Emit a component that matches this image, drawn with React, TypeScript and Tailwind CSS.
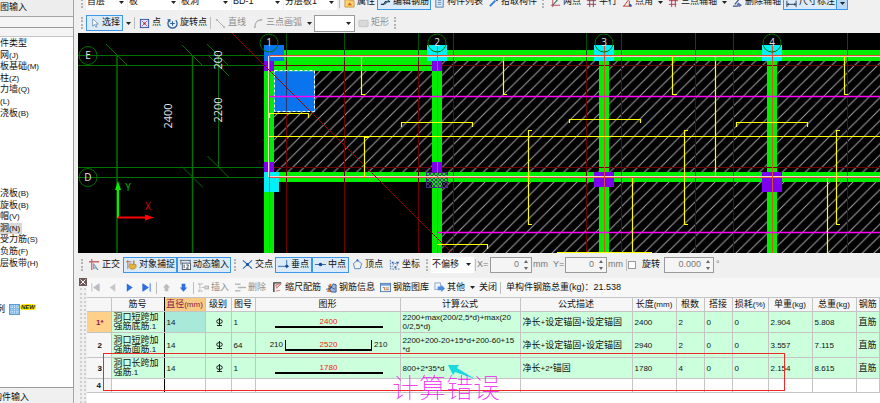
import type { ReactNode } from 'react';

const LIGHT = '#00ee00';
const AXIS = '#007000';
const DARK_RED = '#6e0000';

// ---------- small icons, all on a 12 x 12 grid ----------
const icons: Record<string, ReactNode> = {
    cursor: <path d="M4 1v8l2-2 1.5 3 1.3-.6L7.4 6.500h2.800z" fill="#fff" stroke="#5b7fa8" strokeWidth=".8" />,
    point: <><rect x="1.500" y="1.500" width="9" height="9" fill="#dfe8fb" stroke="#2c4ea5" /><path d="M3 3l6 6M9 3L3 9" stroke="#d04a6a" /><circle cx="6" cy="6" r="1.200" fill="#b0203a" /></>,
    rotate: <><path d="M2.500 2.500A5 5 0 1 0 9.500 2.500" fill="none" stroke="#2b5fa6" strokeWidth="1.400" /><path d="M0 1.500l4-.5-.5 4z" fill="#2b5fa6" /><path d="M6 3.500v5M3.500 6h5" stroke="#2b5fa6" strokeWidth="1.200" /></>,
    line: <><path d="M2 2l8 8" stroke="#a9a9a9" /><path d="M1 1h2v2H1zM9 9h2v2H9z" fill="#b5b5b5" /></>,
    arc: <><path d="M2 10C2 5 5 2 9 2" fill="none" stroke="#a9a9a9" strokeWidth="1.200" /><path d="M1 9h2v2H1zM8 1h2v2H8z" fill="#b5b5b5" /></>,
    rect: <rect x="1" y="2.500" width="10" height="7" rx="1" fill="#d8d8d8" stroke="#c4c4c4" />,
    props: <><path d="M1 3h4l1 1h5v7H1z" fill="#ffd36b" stroke="#b98a2f" strokeWidth=".8" /><path d="M4 9l2-3 3 3z" fill="#c7641e" /></>,
    edit: <><path d="M1 8h3l2-3h5" fill="none" stroke="#1e3350" strokeWidth="1.300" /><path d="M5 8l5-5" stroke="#4a6c94" strokeWidth="1.300" /></>,
    list: <><rect x="2" y="1" width="8" height="10" fill="#e5f0fc" stroke="#4673ad" /><path d="M4 4h4M4 6h4M4 8h4" stroke="#4673ad" strokeWidth=".8" /></>,
    pick: <><path d="M2 10l6-6" stroke="#2d7bd6" strokeWidth="2" /><path d="M7 2l3 3 1-2-2-2z" fill="#174a91" /></>,
    twoPoint: <><path d="M3 1v10M1 9h10" stroke="#c0405a" /><path d="M3 9l6-7" stroke="#2f7a4a" strokeWidth="1.200" /></>,
    parallel: <path d="M4 1v10M8 1v10M1 4h10M1 8h10" stroke="#8a3a55" />,
    angle: <><path d="M1 10h10M2 10l6-8M8 4v6" fill="none" stroke="#c0392b" /><circle cx="9" cy="9" r="1.300" fill="#2c4ea5" /></>,
    threePoint: <path d="M4 1v10M1 4h10M8 3v8M1 8h8" stroke="#b0304a" />,
    eraser: <><path d="M1 10h6M3 8l6-7" stroke="#324f86" strokeWidth="1.200" /><path d="M7 6l4 3-3 2-3-3z" fill="#5d76b5" /></>,
    dimension: <><path d="M1 4v7M11 4v7M1 8h10" stroke="#223a55" /><path d="M1 8l2-1.500v3zM11 8L9 6.500v3z" fill="#223a55" /><path d="M1 1h4v2H1z" fill="#59b86c" /></>,
    ortho: <><path d="M3 0v12M0 3h11" stroke="#c8686a" strokeWidth="1.400" /><path d="M5 5v6l1.500-1.500L10 12z" fill="#b9d0ea" stroke="#5573a0" strokeWidth=".7" /></>,
    snap: <><path d="M2 1v10M0 3h6" stroke="#b06c6c" /><path d="M4 5l4 1V2l1 0v4h2v3l-2 2H5L3 8z" fill="#e7b23a" stroke="#9a7424" strokeWidth=".6" /></>,
    dynInput: <><path d="M0 1.500h12M1 1v5M11 1v3" stroke="#5b6472" /><rect x="2.500" y="4.500" width="9" height="7" fill="#fff" stroke="#4c5563" /><path d="M4.500 6v4M7 6.500h2v1.500l-2 2h2.500" fill="none" stroke="#1e2a3c" strokeWidth=".9" /></>,
    cross: <><path d="M1 1.500l10 9M11 1.500l-10 9" stroke="#2b6cb8" strokeWidth="1.200" /><circle cx="6" cy="6" r="1.600" fill="#1a4f99" /></>,
    perp: <><path d="M9.500 1v9M0 8h12" stroke="#2b66b3" /><circle cx="9.500" cy="8" r="1.600" fill="#164a95" /></>,
    mid: <><path d="M0 6h12" stroke="#2b66b3" /><circle cx="6" cy="6" r="2" fill="#164a95" /></>,
    pentagon: <><path d="M6 1.500L10.500 5 9 10.500H3L1.500 5z" fill="none" stroke="#4f86c6" /><circle cx="6" cy="1.500" r="1.200" fill="#2463ae" /></>,
    coord: <><path d="M1.500 1v10h10M3 9l3-5 3 3 2-5" fill="none" stroke="#4b7ab5" strokeDasharray="2 1" /><path d="M8 3h2v2H8zM3 3h2v2H3zM6 8h2v2H6z" fill="#2e63a6" /></>,
    insert: <><path d="M0 2h5M0 10h5M2 2v8" stroke="#bcbcbc" strokeWidth="1.500" strokeDasharray="2 1" /><path d="M4 6h3" stroke="#bcbcbc" /><rect x="7.500" y="4.500" width="4" height="3" fill="#ddd" stroke="#b0b0b0" /></>,
    remove: <><path d="M0 2.500h6M0 9.500h6M3 6h4" stroke="#bcbcbc" strokeWidth="1.500" /><path d="M6 6h6" stroke="#b0b0b0" strokeWidth="1.500" /></>,
    scale: <><path d="M2 11V1h8" fill="none" stroke="#3d3d3d" strokeWidth="1.500" /><path d="M4 3l6-1-5 5zM4 10l5-1" stroke="#d0605a" fill="#f3c6c0" strokeWidth=".8" /></>,
    info: <><path d="M1 11l3-9 2 0 0 9z" fill="#d7822c" /><path d="M4 8l4-6 3 1v8H6z" fill="#9fb7e0" stroke="#27468c" strokeWidth=".9" /><path d="M0 8l5-1M2 4l8 4" stroke="#27468c" strokeWidth=".8" /></>,
    gallery: <><rect x=".5" y="1.500" width="11" height="9" fill="#eef5ff" stroke="#4f7ab3" /><path d="M1 2h10v2H1z" fill="#6e9cd6" /><path d="M3 6h2v3M6 6.500h4M6 8.500h4" fill="none" stroke="#b06f2a" strokeWidth=".9" /></>,
    other: <><rect x="1" y="1" width="6" height="7" fill="#eef5ff" stroke="#8aa4c8" /><path d="M4 5h4V3l4 4-4 4V9H4z" fill="#4d8be0" /></>,
    first: <path d="M2 1.500v9M10 2v8L4 6z" fill="#b9bdc3" stroke="#b9bdc3" />,
    prev: <path d="M9 1.500v9L3 6z" fill="#c3c7cc" />,
    next: <path d="M3 1.500v9L9.500 6z" fill="#2d6fe0" />,
    last: <path d="M2 2v8l6-4zM10 1.500v9" fill="#2d6fe0" stroke="#2d6fe0" />,
    up: <path d="M6 2l4 4H8v4H4V6H2z" fill="#bcbcc0" />,
    down: <path d="M6 10.500L10 6H8V2H4v4H2z" fill="#2d6fe0" />,
};

function Icon({ name }: { name: string }) {
    return <svg viewBox="0 0 12 12" className="h-[11px] w-[11px] shrink-0">{icons[name]}</svg>;
}

function Tool({ icon, label, width, on, off }: { icon: string; label: string; width: string; on?: boolean; off?: boolean }) {
    return (
        <button
            className={`flex h-4 shrink-0 items-center gap-0.5 whitespace-nowrap border px-0.5 ${width} ${on ? 'border-[#3c97e8] bg-[#dcebf9]' : 'border-transparent'} ${off ? 'text-[#8e8e8e]' : ''}`}
        >
            <Icon name={icon} />
            {label}
        </button>
    );
}

function NavButton({ icon, label }: { icon: string; label: string }) {
    return (
        <button aria-label={label} className="flex h-4 w-[17px] shrink-0 items-center justify-center">
            <Icon name={icon} />
        </button>
    );
}

const Caret = () => <svg viewBox="0 0 5 3" className="h-[3px] w-[5px]"><path d="M0 0h5L2.500 3z" fill="#222" /></svg>;
const Grip = () => <span className="mx-[3px] h-3 w-0.5 shrink-0 border-l-2 border-dotted border-[#b4b4b4]" />;
const Sep = () => <span className="mx-px h-3 w-px shrink-0 bg-[#bdbdbd]" />;

function More({ label }: { label: string }) {
    return <button aria-label={label} className="flex h-4 w-[10px] shrink-0 items-center justify-center"><Caret /></button>;
}

function Combo({ label, value, className }: { label: string; value: string; className: string }) {
    return (
        <span className={`relative flex shrink-0 items-center bg-white ${className}`}>
            <select aria-label={label} className="h-full w-full appearance-none pl-px outline-none">
                <option>{value}</option>
            </select>
            <span className="pointer-events-none absolute right-[3px]"><Caret /></span>
        </span>
    );
}

function Spin({ id, value, width }: { id: string; value: string; width: string }) {
    return (
        <span className={`flex h-4 shrink-0 items-center border border-[#9a9a9a] bg-[#f5f5f5] ${width}`}>
            <input id={id} defaultValue={value} className="w-full min-w-0 bg-transparent pr-1 text-right text-[#777] outline-none" />
            <svg viewBox="0 0 6 12" className="mr-0.5 h-3 w-[6px] shrink-0"><path d="M1 4l2-3 2 3zM1 8l2 3 2-3z" fill="#666" /></svg>
        </span>
    );
}

// Chinese at full size, the half-width characters a step smaller
function Mix({ children }: { children: string }) {
    return (
        <>
            {children.split(/([\x20-\x7e]+)/).filter(Boolean).map((part, i) =>
                /[\x20-\x7e]/.test(part) ? <span key={i} className="text-[8px]">{part}</span> : part
            )}
        </>
    );
}

const tree = [
    '件类型', '网(J)', '板基础(M)', '柱(Z)', '力墙(Q)', '(L)', '浇板(B)', '', '', '', '', '', '',
    '浇板(B)', '旋板(B)', '帽(V)', '洞(N)', '受力筋(S)', '负筋(F)', '层板带(H)', '', '', '',
];

function Sidebar() {
    return (
        <aside className="flex w-[78px] shrink-0 flex-col overflow-hidden bg-[#f0f0f0]">
            <div className="mr-1 flex h-[17px] items-center border-r border-b border-[#a5a5a5] bg-[#ededed] whitespace-nowrap">
                图输入
            </div>
            <div className="mr-1 h-[10px] border-r border-[#a5a5a5] bg-[#f4f4f4]" />
            <div className="mr-1 flex-1 border-y border-r border-[#9a9a9a] bg-white">
                <div className="h-[9px] border-b border-[#c4c4c4] bg-[#f4f4f4]" />
                <ul className="mt-px grid h-[277px] auto-rows-fr">
                    {tree.map((name, i) => (
                        <li key={i} className="flex items-center whitespace-nowrap leading-none">
                            <span className={name === '洞(N)' ? 'bg-[#d9d9d9] py-px pr-0.5' : ''}><Mix>{name}</Mix></span>
                        </li>
                    ))}
                    <li className="flex items-center whitespace-nowrap leading-none">
                        <span className="-ml-1">例</span>
                        <svg viewBox="0 0 11 11" className="ml-1 h-[11px] w-[11px] shrink-0">
                            <rect x=".5" y=".5" width="10" height="10" fill="#7db8ec" stroke="#5a9bd8" />
                            <path d="M3 1v9M5.500 1v9M8 1v9M1 3h9M1 8h9" stroke="#d7ebfb" strokeDasharray="1 1" />
                        </svg>
                        <span className="-mt-1 rounded-sm bg-[#ffee00] px-px text-[6px] font-black italic text-[#222]">NEW</span>
                    </li>
                </ul>
            </div>
            <div className="mr-1 flex h-[15px] items-center border-r border-[#a5a5a5] whitespace-nowrap pt-1">
                <span className="-ml-[7px]">构件输入</span>
            </div>
        </aside>
    );
}

// ---------- drawing ----------
const axes = [
    { n: '1', x: 269 }, { n: '2', x: 437 }, { n: '3', x: 604 }, { n: '4', x: 772 },
];
const redGrid = [287, 345, 419, 454, 587, 622, 696, 734, 848];
const bays = [
    { x: 274, y: 71, w: 158, h: 101 },
    { x: 442, y: 61, w: 157, h: 111 },
    { x: 609, y: 61, w: 158, h: 111 },
    { x: 777, y: 61, w: 103, h: 111 },
    { x: 442, y: 182, w: 157, h: 71 },
    { x: 609, y: 182, w: 158, h: 71 },
    { x: 777, y: 182, w: 103, h: 71 },
];
const blocks = [
    { x: 264, y: 45, w: 20, h: 16, fill: '#0a74ee' },
    { x: 264, y: 61, w: 10, h: 10, fill: '#7d00f0' },
    { x: 427, y: 45, w: 20, h: 16, fill: '#00f0f8' },
    { x: 432, y: 61, w: 10, h: 10, fill: '#7d00f0' },
    { x: 594, y: 45, w: 20, h: 16, fill: '#00f0f8' },
    { x: 762, y: 45, w: 20, h: 16, fill: '#00f0f8' },
    { x: 264, y: 162, w: 10, h: 10, fill: '#7d00f0' },
    { x: 264, y: 172, w: 15, h: 20, fill: '#00f0f8' },
    { x: 432, y: 162, w: 10, h: 10, fill: '#7d00f0' },
    { x: 594, y: 172, w: 20, h: 15, fill: '#7d00f0' },
    { x: 762, y: 172, w: 20, h: 20, fill: '#7d00f0' },
];
const rebars = [
    'M269 136.500H880',
    'M361.500 56V94.500H365', 'M503.500 56V94.500H507', 'M672.500 56V94.500H677', 'M844.500 56V94.500H848',
    'M269.500 118V113.500H308.500V118', 'M401.500 127V122.500H472.500V127', 'M569.500 123V119.500H640.500V123', 'M736.500 127V122.500H807.500V127',
    'M715.500 56V177', 'M369 137.500H364.500V177',
    'M532 130.500H528.500V224.500H532', 'M688 130.500H684.500V224.500H688', 'M840 130.500H836.500V224.500H840',
    'M632.500 178V253', 'M827.500 178V253', 'M437 244.500H487.500V249', 'M557 252.500H652',
];

function Drawing() {
    return (
        <svg
            viewBox="78 33 802 220"
            preserveAspectRatio="xMinYMin slice"
            className="block w-full bg-black font-['Open_Sans','Noto_Sans',sans-serif]"
        >
            <defs>
                <pattern id="hatch" width="11.500" height="11.500" patternUnits="userSpaceOnUse">
                    <path d="M-1 12.500L12.500 -1M-1 1L1 -1M10.500 12.500L12.500 10.500" stroke="#a4a4a4" />
                </pattern>
                <pattern id="check" width="4" height="4" patternUnits="userSpaceOnUse">
                    <path d="M0 0l4 4M4 0L0 4" stroke="#4b2a86" strokeWidth=".9" />
                </pattern>
            </defs>

            {bays.map((b, i) => <rect key={i} x={b.x} y={b.y} width={b.w} height={b.h} fill="url(#hatch)" />)}

            {/* dimension lines */}
            <g stroke={AXIS} fill="none">
                <path d="M78 55.500H269M78 65.500H269M78 167.500H269M78 177.500H269" />
                <path d="M117 55V253M192.500 55V253" strokeWidth="1.500" />
                <path d="M218.500 55V167" />
                <path d="M106 44l21 21M182 45l21 21M207 44l22 22M208 55l21 21M182 166.500l21 21M207.500 156l22 22" />
            </g>

            {/* beams */}
            <g fill={LIGHT}>
                <path d="M264 50H880V61H442V71H264zM264 172H880V182H264z" />
                {axes.map(a => <rect key={a.n} x={a.x - 5} y="50" width="10" height="203" />)}
            </g>

            <g stroke={DARK_RED}>
                {redGrid.map(x => <path key={x} d={`M${x - 0.5} 61V253`} />)}
                <path d="M274 65.500H880M274 167.500H880" />
            </g>
            <g stroke="#005200">
                {redGrid.map(x => <path key={x} d={`M${x - 0.5} 33V61`} />)}
            </g>

            {blocks.map((b, i) => <rect key={i} x={b.x} y={b.y} width={b.w} height={b.h} fill={b.fill} />)}
            <rect x="426.500" y="172.500" width="21" height="15" fill="url(#check)" stroke="#4b2a86" />

            {/* axes over the beams */}
            <g>
                <path d="M269 56.500H880M269 176.500H880M268.500 56V177M437.500 177V253" stroke="#f2d8d0" />
                <path d="M269 55.500H880M269 177.500H880" stroke="#e05038" />
                {axes.map(a => <path key={a.n} d={`M${a.x + 0.5} 45V253`} stroke="#d8502c" />)}
            </g>

            <rect x="274.500" y="71.500" width="40" height="40" fill="#0a74ee" stroke="#1e9bd8" />
            <rect x="274.500" y="70.500" width="40" height="41" fill="none" stroke="#fff" strokeDasharray="3 2" />
            <path d="M286.500 71V111" stroke="#2a3470" />
            <path d="M232 33L452 253" stroke="#8a0000" />

            <path d="M269 96.500H880M437 232.500H880" stroke="#ff00ff" strokeWidth="1.400" />
            <path d={rebars.join('')} fill="none" stroke="#ffff00" strokeWidth="1.200" />

            <g fill="none" stroke={AXIS}>
                {axes.map(a => <circle key={a.n} cx={a.x} cy="43" r="9" />)}
                <circle cx="88" cy="55.500" r="9" />
                <circle cx="88" cy="177.500" r="9" />
            </g>
            <g fill="#e4e4e4" textAnchor="middle" fontSize="10">
                {axes.map(a => <text key={a.n} x={a.x} y="46">{a.n}</text>)}
                <text x="88" y="59">E</text>
                <text x="88" y="181">D</text>
                <g fontSize="11">
                    <text transform="translate(172 116) rotate(-90)">2400</text>
                    <text transform="translate(222 60) rotate(-90)">200</text>
                    <text transform="translate(222 110) rotate(-90)">2200</text>
                </g>
            </g>

            {/* origin */}
            <path d="M118 218V188" stroke="#00f000" strokeWidth="2" />
            <path d="M115 190L118 181L121 190z" fill="#00f000" />
            <path d="M118 217.500H147" stroke="#f00" strokeWidth="2" />
            <path d="M145 214.500L154 217.500L145 220.500z" fill="#f00" />
            <g fontSize="10" textAnchor="middle">
                <text x="128" y="191" fill="#00c000">Y</text>
                <text x="148" y="210" fill="#e00000">X</text>
            </g>
        </svg>
    );
}

// ---------- rebar table ----------
const columns = [
    { title: '', width: 'w-[24px]' },
    { title: '筋号', width: 'w-[53px]' },
    { title: '直径(mm)', width: 'w-[41px]' },
    { title: '级别', width: 'w-[26px]' },
    { title: '图号', width: 'w-[24px]' },
    { title: '图形', width: 'w-[145px]' },
    { title: '计算公式', width: 'w-[120px]' },
    { title: '公式描述', width: 'w-[112px]' },
    { title: '长度(mm)', width: 'w-[44px]' },
    { title: '根数', width: 'w-[28px]' },
    { title: '搭接', width: 'w-[28px]' },
    { title: '损耗(%)', width: 'w-[36px]' },
    { title: '单重(kg)', width: 'w-[44px]' },
    { title: '总重(kg)', width: 'w-[44px]' },
    { title: '钢筋', width: '' },
];

const rows = [
    { name: ['洞口短跨加', '强筋底筋.1'], shape: '1', size: '2400', formula: ['2200+max(200/2,5*d)+max(20', '0/2,5*d)'], note: '净长+设定锚固+设定锚固', rest: ['2400', '2', '0', '0', '2.904', '5.808', '直筋'] },
    { name: ['洞口短跨加', '强筋面筋.1'], shape: '64', size: '2520', hook: '210', formula: ['2200+200-20+15*d+200-60+15', '*d'], note: '净长+设定锚固+设定锚固', rest: ['2940', '2', '0', '0', '3.557', '7.115', '直筋'] },
    { name: ['洞口长跨加', '强筋.1'], shape: '1', size: '1780', formula: ['800+2*35*d'], note: '净长+2*锚固', rest: ['1780', '4', '0', '0', '2.154', '8.615', '直筋'] },
];
const rowHeights = ['h-[21px]', 'h-[25px]', 'h-[21px]'];

function Shape({ size, hook }: { size: string; hook?: string }) {
    return (
        <div className="flex items-end justify-center gap-0.5 text-[8px] leading-[9px]">
            {hook && <span className="pb-0.5">{hook}</span>}
            <span className={`border-b-2 border-black text-center text-[#f01818] ${hook ? 'w-[87px] border-x' : 'w-[108px]'}`}>{size}</span>
            {hook && <span className="pb-0.5">{hook}</span>}
        </div>
    );
}

function RebarTable() {
    return (
        <table className="w-full table-fixed border-collapse whitespace-nowrap leading-[9px]">
            <thead>
                <tr className="h-[14px]">
                    {columns.map((c, i) => (
                        <th
                            key={i}
                            className={`border-y border-r border-[#c4c4c4] p-0 font-normal ${c.width} ${i === 2 ? 'bg-[#f8ca84] text-[#8a1a4a]' : 'bg-[#f6f6f6]'} ${i === 1 ? 'border-r-black' : ''}`}
                        >
                            <Mix>{c.title}</Mix>
                        </th>
                    ))}
                </tr>
            </thead>
            <tbody>
                {rows.map((r, i) => (
                    <tr key={i} className={`bg-[#ccffdb] *:border-r *:border-b *:border-[#c4c4c4] *:p-0 *:pl-0.5 ${rowHeights[i]}`}>
                        <th className={`text-[8px] ${i === 0 ? 'bg-[#ffd08a] font-bold text-[#8a1a4a]' : 'bg-[#f6f6f6]'}`}>{i === 0 ? '1*' : i + 1}</th>
                        <td className="border-r-black!">{r.name.map(l => <div key={l}><Mix>{l}</Mix></div>)}</td>
                        <td className={i === 0 ? 'bg-[#a9e9da]' : ''}><Mix>14</Mix></td>
                        <td>
                            <svg viewBox="0 0 7 8" className="mx-auto h-2 w-[7px]"><path d="M3.500 0v7M1 7.500h5" stroke="#222" /><ellipse cx="3.500" cy="3.500" rx="2.800" ry="2" fill="none" stroke="#222" /></svg>
                        </td>
                        <td><Mix>{r.shape}</Mix></td>
                        <td><Shape size={r.size} hook={r.hook} /></td>
                        <td>{r.formula.map(l => <div key={l}><Mix>{l}</Mix></div>)}</td>
                        <td><Mix>{r.note}</Mix></td>
                        {r.rest.map((v, j) => <td key={j}><Mix>{v}</Mix></td>)}
                    </tr>
                ))}
                <tr className="h-[14px] bg-white *:border-r *:border-b *:border-[#c4c4c4] *:p-0">
                    <th className="bg-[#f6f6f6] text-[8px]">4</th>
                    {columns.slice(1).map((c, i) => <td key={c.title} className={i === 0 ? 'border-r-black!' : ''} />)}
                </tr>
            </tbody>
        </table>
    );
}

export default function App() {
    return (
        <div className="flex h-screen overflow-hidden bg-[#f0f0f0] font-['Liberation_Sans','Noto_Sans_CJK_SC',sans-serif] text-[9px] text-[#111]">
            <Sidebar />
            <main className="flex min-w-0 flex-1 flex-col">
                <div className="h-[11px] overflow-hidden">
                    <div className="-mt-1.5 flex h-4 items-center">
                        <Grip />
                        <Combo label="楼层" value="首层" className="mr-px h-4 w-[41px]" />
                        <Combo label="构件类型" value="板" className="mr-px h-4 w-[51px]" />
                        <Combo label="构件" value="板洞" className="mr-px h-4 w-[51px]" />
                        <Combo label="名称" value="BD-1" className="mr-px h-4 w-[51px]" />
                        <Combo label="分层" value="分层板1" className="mr-px h-4 w-[53px]" />
                        <Sep />
                        <Tool icon="props" label="属性" width="w-[36px]" />
                        <Tool icon="edit" label="编辑钢筋" width="w-[54px]" on />
                        <Tool icon="list" label="构件列表" width="w-[54px]" />
                        <Tool icon="pick" label="拾取构件" width="w-[54px]" />
                        <Grip />
                        <Tool icon="twoPoint" label="两点" width="w-[36px]" />
                        <Tool icon="parallel" label="平行" width="w-[36px]" />
                        <Tool icon="angle" label="点角" width="w-[36px]" />
                        <More label="点角选项" />
                        <Tool icon="threePoint" label="三点辅轴" width="w-[54px]" />
                        <More label="三点辅轴选项" />
                        <Tool icon="eraser" label="删除辅轴" width="w-[54px]" />
                        <Tool icon="dimension" label="尺寸标注" width="w-[54px]" on />
                        <span className="h-4 border border-l-0 border-[#3c97e8] bg-[#b9d8f5]"><More label="尺寸标注选项" /></span>
                    </div>
                </div>

                <div className="flex h-[22px] items-center pt-0.5">
                    <Grip />
                    <Tool icon="cursor" label="选择" width="w-[37px]" on />
                    <More label="选择方式" />
                    <Sep />
                    <Tool icon="point" label="点" width="w-[28px]" />
                    <Tool icon="rotate" label="旋转点" width="w-[45px]" />
                    <Sep />
                    <Tool icon="line" label="直线" width="w-[38px]" off />
                    <Tool icon="arc" label="三点画弧" width="w-[54px]" off />
                    <More label="三点画弧选项" />
                    <Combo label="半径" value="" className="h-[17px] w-[41px] border border-[#9a9a9a]" />
                    <Tool icon="rect" label="矩形" width="w-[36px]" off />
                    <Grip />
                </div>

                <Drawing />

                <div className="flex h-[25px] items-center pb-0.5">
                    <Grip />
                    <Tool icon="ortho" label="正交" width="w-[37px]" />
                    <Tool icon="snap" label="对象捕捉" width="w-[54px]" on />
                    <Tool icon="dynInput" label="动态输入" width="w-[54px]" on />
                    <Grip />
                    <Tool icon="cross" label="交点" width="w-[36px]" />
                    <Tool icon="perp" label="垂点" width="w-[37px]" on />
                    <Tool icon="mid" label="中点" width="w-[37px]" on />
                    <Tool icon="pentagon" label="顶点" width="w-[37px]" />
                    <Tool icon="coord" label="坐标" width="w-[37px]" />
                    <Grip />
                    <Combo label="偏移方式" value="不偏移" className="h-4 w-[43px]" />
                    <Sep />
                    <label htmlFor="offset-x" className="w-[13px] text-[#777]">X=</label>
                    <Spin id="offset-x" value="0" width="w-[42px]" />
                    <span className="w-[21px] pl-px text-[#777]">mm</span>
                    <label htmlFor="offset-y" className="w-[12px] text-[#777]">Y=</label>
                    <Spin id="offset-y" value="0" width="w-[42px]" />
                    <span className="w-[18px] pl-px text-[#777]">mm</span>
                    <Sep />
                    <label className="flex w-[36px] items-center gap-1.5 whitespace-nowrap">
                        <input type="checkbox" className="h-2 w-2 appearance-none border border-[#9a9a9a] bg-white" />
                        旋转
                    </label>
                    <Spin id="angle" value="0.000" width="w-[50px]" />
                    <label htmlFor="angle" className="pl-0.5 text-[#777]">°</label>
                </div>

                <div className="flex flex-1">
                    <div className="flex w-[9px] shrink-0 flex-col items-center gap-0.5">
                        <button aria-label="关闭面板" className="h-2 w-2 bg-[#6b5555]">
                            <svg viewBox="0 0 8 8" className="h-2 w-2"><path d="M1.500 1.500l5 5M6.500 1.500l-5 5" stroke="#fff" /></svg>
                        </button>
                        <span className="flex-1 border-x-2 border-dotted border-[#cfcfcf] px-px" />
                    </div>
                    <div className="min-w-0 flex-1 bg-white">
                        <div className="flex h-[19px] items-center bg-[#f7f7f7]">
                            <NavButton icon="first" label="首行" />
                            <NavButton icon="prev" label="上一行" />
                            <NavButton icon="next" label="下一行" />
                            <NavButton icon="last" label="末行" />
                            <Sep />
                            <NavButton icon="up" label="上移" />
                            <NavButton icon="down" label="下移" />
                            <Sep />
                            <Tool icon="insert" label="插入" width="w-[37px]" off />
                            <Tool icon="remove" label="删除" width="w-[37px]" off />
                            <Tool icon="scale" label="缩尺配筋" width="w-[54px]" />
                            <Tool icon="info" label="钢筋信息" width="w-[54px]" />
                            <Tool icon="gallery" label="钢筋图库" width="w-[54px]" />
                            <Tool icon="other" label="其他" width="w-[36px]" />
                            <More label="其他选项" />
                            <button className="w-[22px] shrink-0 whitespace-nowrap">关闭</button>
                            <Sep />
                            <span className="whitespace-nowrap pl-1">单构件钢筋总重(kg)：21.538</span>
                        </div>
                        <div className="relative">
                            <RebarTable />
                            <div className="absolute top-[56px] left-4 h-[38px] w-[682px] border border-[#f02828]" />
                            <svg viewBox="0 0 28 16" className="absolute top-[67px] left-[361px] h-4 w-7">
                                <path d="M0 1L11 1L9 4L27 15L7 8L5 11z" fill="#18d8e0" />
                            </svg>
                            <p className="absolute top-[78px] left-[305px] whitespace-nowrap text-[27px] leading-[28px] font-thin text-[#f020f0]">计算错误</p>
                        </div>
                    </div>
                </div>
            </main>
        </div>
    );
}
